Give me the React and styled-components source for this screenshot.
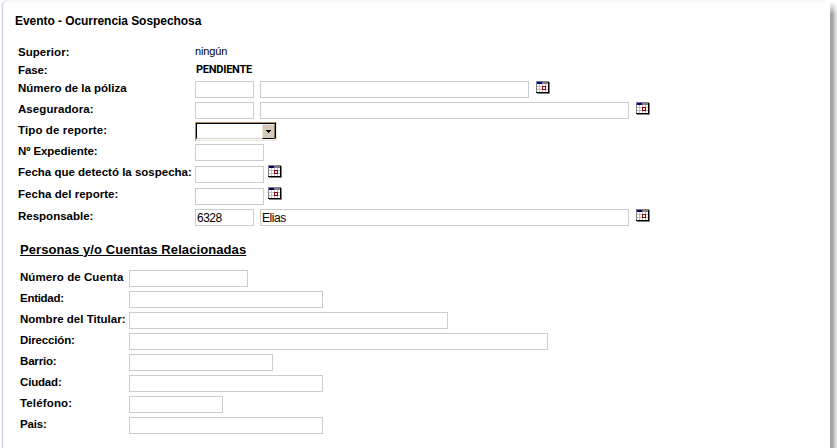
import React from 'react';
import styled, { createGlobalStyle } from 'styled-components';

const GlobalStyle = createGlobalStyle`
  * { box-sizing: border-box; }
  html, body { margin: 0; height: 448px; overflow: hidden; background: #fff; }
  body { font-family: "Liberation Sans", Arial, sans-serif; color: #000; }
`;

const Page = styled.div`
  display: flex;
  width: 837px;
  height: 448px;
  padding-left: 2px;
`;

const Panel = styled.main`
  flex: 1;
  height: 460px;
  padding: 13px 0 0 12px;
  background: linear-gradient(to bottom, #f8f8f8, #fff 5px);
  border-left: 1px solid #ccd3e3;
  border-radius: 6px 7px 0 0;
  box-shadow: inset 1px 0 0 #f2f5fb, -1px 0 0 #eef1f8;
`;

const Shadow = styled.div`
  width: 7px;
  margin-top: 2px;
  border-radius: 0 5px 0 0;
  background: linear-gradient(to right, #a2a2a2 0, #a8a8a8 3px, #c2c2c2 4px, #d2d2d2 5px, #e8e8e8 7px);
  mask-image: linear-gradient(to bottom, transparent, #000 12px);
`;

const Title = styled.h1`
  margin: 0;
  font: bold 12px/16px "Liberation Sans", Arial, sans-serif;
  letter-spacing: -0.06px;
  white-space: nowrap;
`;

const Section = styled.h2`
  margin: 0;
  padding-left: 5px;
  font: bold 13px/18px "Liberation Sans", Arial, sans-serif;
  letter-spacing: 0.09px;
  text-decoration: underline;
  text-decoration-thickness: 1px;
  text-underline-offset: 1px;
  white-space: nowrap;
`;

const Form = styled.div`
  display: flex;
  flex-direction: column;
  padding: ${(p) => p.$pad};
`;

const Row = styled.div`
  display: flex;
  align-items: flex-start;
  height: ${(p) => p.$h || 21}px;
`;

const Label = styled.label`
  flex: none;
  width: ${(p) => p.$w}px;
  margin-top: ${(p) => p.$dy || 0}px;
  font-size: 11.5px;
  font-weight: bold;
  line-height: 14px;
  letter-spacing: ${(p) => p.$ls || 0}px;
  white-space: nowrap;
`;

const Value = styled.span`
  font-size: 11px;
  line-height: 14px;
  letter-spacing: -0.15px;
`;

const Phase = styled(Value)`
  padding-left: 1px;
  font-family: Roboto, "Liberation Sans", sans-serif;
  font-weight: bold;
  letter-spacing: -0.25px;
`;

const Input = styled.input`
  flex: none;
  width: ${(p) => p.$w}px;
  height: 17px;
  margin: 0 ${(p) => p.$gap ?? 6}px 0 0;
  padding: 0 0 0 1px;
  border: 1px solid #ccc;
  outline: 0;
  background: #fff;
  color: #000;
  font: 12px/14px "Liberation Sans", Arial, sans-serif;
  letter-spacing: ${(p) => p.$ls ?? -0.5}px;
`;

const Select = styled.div`
  display: flex;
  width: 82px;
  height: 19px;
  border: 1px solid;
  border-color: #a98c62 #ece6da #ece6da #a98c62;
`;

const SelectBody = styled.div`
  display: flex;
  justify-content: flex-end;
  width: 80px;
  height: 16px;
  border: 1px solid #000;
  border-bottom-color: #d4d0c8;
  background: #fff;
`;

const Arrow = styled.button`
  display: flex;
  align-items: center;
  justify-content: center;
  width: 13px;
  height: 15px;
  padding: 0;
  border: 1px solid;
  border-color: #ece6da #85796a #000 #ece6da;
  border-radius: 0;
  background: #d4c9b8;
`;

const IconSlot = styled.span`
  display: block;
  width: 14px;
  height: 13px;
  margin-top: ${(p) => p.$dy || 0}px;
  line-height: 0;
`;

function Calendar({ dy }) {
  return (
    <IconSlot $dy={dy}>
      <svg width="14" height="13" viewBox="0 0 14 13" shapeRendering="crispEdges">
        <path fill="#808080" d="M0 0h13v1h1v12H1v-1H0z" />
        <path fill="#fff" d="M1 3h11v8H1z" />
        <path fill="#c0c0c0" d="M3 3h1v8H3zM6 3h1v8H6zM9 3h1v8H9zM1 5h11v1H1zM1 8h11v1H1z" />
        <path fill="#808080" d="M6 1h6v2H6z" />
        <path fill="#000080" d="M1 1h5v2H1z" />
        <path fill="#000" d="M12 1h1v11H0v-1h12z" />
        <path fill="#900000" d="M6 5h4v4H6z" />
        <path fill="#fff" d="M7 6h2v2H7z" />
      </svg>
    </IconSlot>
  );
}

const accounts = [
  ['Número de Cuenta', 119, 0.07],
  ['Entidad:', 194, -0.28],
  ['Nombre del Titular:', 319, 0.02],
  ['Dirección:', 419, -0.15],
  ['Barrio:', 144, -0.17],
  ['Ciudad:', 194, -0.17],
  ['Teléfono:', 94, 0.15],
  ['Pais:', 194, -0.17],
];

export default function App() {
  return (
    <>
      <GlobalStyle />
      <Page>
        <Panel>
          <Title>Evento - Ocurrencia Sospechosa</Title>
          <Form $pad="15px 0 0 3px">
            <Row $h={19}>
              <Label $w={177} $dy={1} $ls={0.05}>Superior:</Label>
              <Value>ningún</Value>
            </Row>
            <Row $h={18}>
              <Label $w={177} $ls={-0.12}>Fase:</Label>
              <Phase>PENDIENTE</Phase>
            </Row>
            <Row>
              <Label $w={177} $ls={0}>Número de la póliza</Label>
              <Input $w={59} />
              <Input $w={269} $gap={7} />
              <Calendar />
            </Row>
            <Row $h={20}>
              <Label $w={177} $ls={0.07}>Aseguradora:</Label>
              <Input $w={59} />
              <Input $w={369} $gap={7} />
              <Calendar />
            </Row>
            <Row $h={22}>
              <Label $w={177} $dy={1} $ls={0.12}>Tipo de reporte:</Label>
              <Select>
                <SelectBody>
                  <Arrow aria-label="Tipo de reporte">
                    <svg width="5" height="3" viewBox="0 0 5 3" shapeRendering="crispEdges">
                      <path d="M0 0h5v1H4v1H3v1H2V2H1V1H0z" />
                    </svg>
                  </Arrow>
                </SelectBody>
              </Select>
            </Row>
            <Row $h={22}>
              <Label $w={177} $ls={-0.1}>Nº Expediente:</Label>
              <Input $w={69} />
            </Row>
            <Row $h={22}>
              <Label $w={177} $dy={-1} $ls={0}>Fecha que detectó la sospecha:</Label>
              <Input $w={69} $gap={4} />
              <Calendar dy={-1} />
            </Row>
            <Row>
              <Label $w={177} $dy={-1} $ls={0.04}>Fecha del reporte:</Label>
              <Input $w={69} $gap={4} />
              <Calendar dy={-1} />
            </Row>
            <Row $h={32}>
              <Label $w={177} $ls={0}>Responsable:</Label>
              <Input $w={59} defaultValue="6328" />
              <Input $w={369} $gap={7} $ls={-0.45} defaultValue="Elias" />
              <Calendar />
            </Row>
          </Form>
          <Section>Personas y/o Cuentas Relacionadas</Section>
          <Form $pad="11px 0 0 5px">
            {accounts.map(([name, width, spacing]) => (
              <Row key={name}>
                <Label $w={109} $ls={spacing}>{name}</Label>
                <Input $w={width} />
              </Row>
            ))}
          </Form>
        </Panel>
        <Shadow />
      </Page>
    </>
  );
}
